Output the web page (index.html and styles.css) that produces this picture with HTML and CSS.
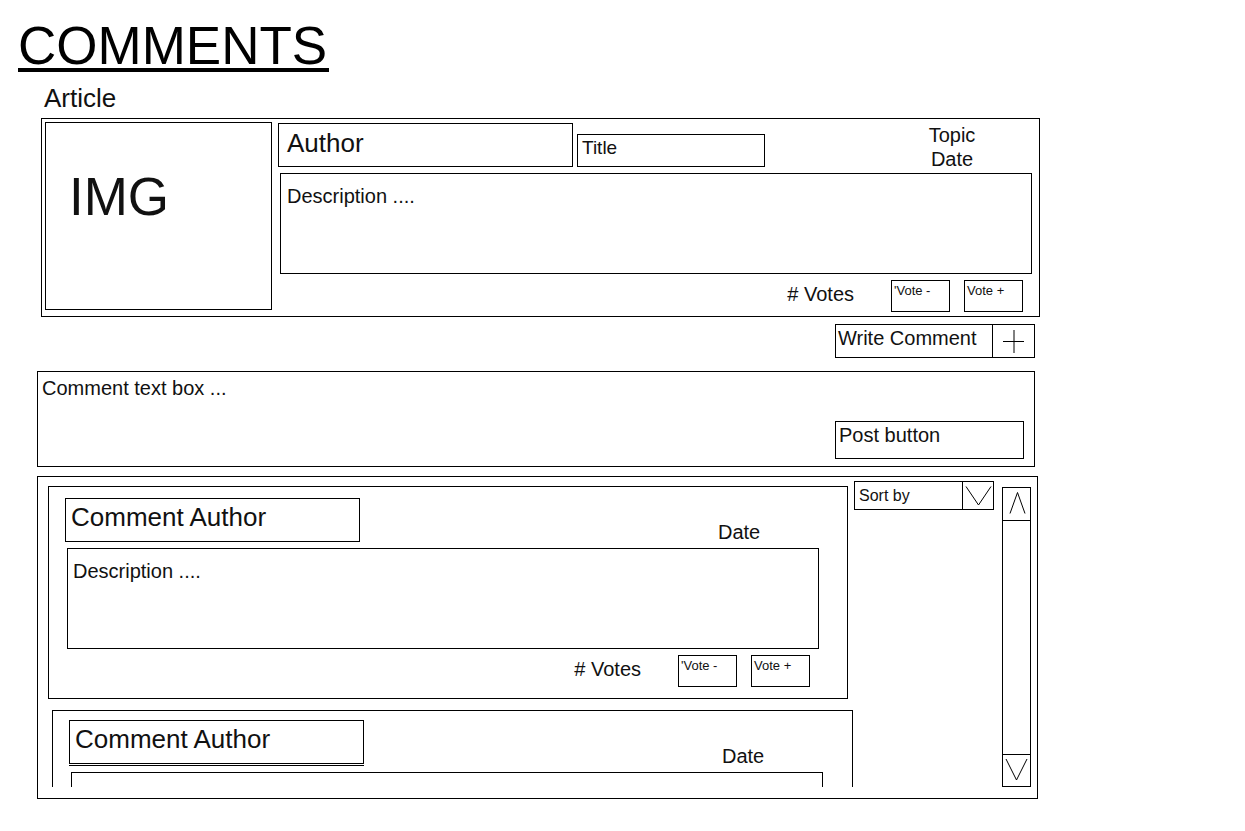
FILE: index.html
```html
<!DOCTYPE html>
<html lang="en">
<head>
    <meta charset="UTF-8">
    <meta name="viewport" content="width=device-width, initial-scale=1.0">
    <title>Comments</title>
    <link rel="stylesheet" href="styles.css">
</head>
<body>
    <div class="page">
        <h1 class="page-title">COMMENTS</h1>
        <div class="section-label">Article</div>

        <div class="article">
            <div class="img-box">IMG</div>
            <div class="article-main">
                <div class="article-head">
                    <div class="author-box">Author</div>
                    <div class="title-box">Title</div>
                    <div class="topic-date">Topic<br>Date</div>
                </div>
                <div class="desc-box article-desc">Description ....</div>
                <div class="vote-row article-votes">
                    <span class="vote-count"># Votes</span>
                    <div class="vote-btn">'Vote -</div>
                    <div class="vote-btn">Vote +</div>
                </div>
            </div>
        </div>

        <div class="write-row">
            <div class="write-label">Write Comment</div>
            <div class="plus-box">
                <svg width="22" height="23" viewBox="0 0 22 23"><path d="M0 11.5H21M11 0V23" stroke="#000" stroke-width="1" fill="none"/></svg>
            </div>
        </div>

        <div class="comment-form">
            <div class="form-text">Comment text box ...</div>
            <div class="post-btn">Post button</div>
        </div>

        <div class="comment-list">
            <div class="comment-scroll">
                <div class="comment">
                    <div class="comment-head">
                        <div class="comment-author">Comment Author</div>
                        <div class="comment-date">Date</div>
                    </div>
                    <div class="desc-box comment-desc">Description ....</div>
                    <div class="vote-row comment-votes">
                        <span class="vote-count"># Votes</span>
                        <div class="vote-btn">'Vote -</div>
                        <div class="vote-btn">Vote +</div>
                    </div>
                </div>
                <div class="comment comment-second">
                    <div class="comment-head">
                        <div class="comment-author doubled">Comment Author</div>
                        <div class="comment-date">Date</div>
                    </div>
                    <div class="desc-box comment-desc"></div>
                </div>
            </div>

            <div class="sort-by">
                <div class="sort-label">Sort by</div>
                <div class="sort-arrow">
                    <svg width="30" height="27" viewBox="0 0 30 27"><polyline points="3,4.5 15.5,23 28,4.5" stroke="#000" stroke-width="1" fill="none"/></svg>
                </div>
            </div>

            <div class="scrollbar">
                <div class="scroll-btn scroll-up">
                    <svg width="27" height="32" viewBox="0 0 27 32"><polyline points="7,25.5 14.5,4.5 22,25.5" stroke="#000" stroke-width="1" fill="none"/></svg>
                </div>
                <div class="scroll-btn scroll-down">
                    <svg width="27" height="31" viewBox="0 0 27 31"><polyline points="3,4 13.5,25 24,4" stroke="#000" stroke-width="1" fill="none"/></svg>
                </div>
            </div>
        </div>
    </div>
</body>
</html>
```

FILE: styles.css
```css
* {
    box-sizing: border-box;
}

body {
    margin: 0;
    font-family: "Liberation Sans", Arial, sans-serif;
    color: #111;
    background-color: #fff;
}

.page {
    padding-top: 19px;
}

.page-title {
    display: block;
    width: fit-content;
    margin: 0 0 0 18px;
    padding-right: 2px;
    height: 53px;
    font-size: 53px;
    font-weight: normal;
    line-height: 53px;
    color: #000;
    border-bottom: 4px solid #000;
}

.section-label {
    margin: 13px 0 0 44px;
    font-size: 26px;
    line-height: 26px;
}

/* article card */
.article {
    display: flex;
    width: 999px;
    height: 199px;
    margin: 7px 0 0 41px;
    padding: 3px 7px 0 3px;
    border: 1px solid #000;
}

.img-box {
    width: 227px;
    height: 188px;
    padding: 44px 0 0 23px;
    border: 1px solid #000;
    font-size: 53px;
    line-height: 60px;
}

.article-main {
    flex: 1;
    margin: 1px 0 0 6px;
}

.article-head {
    display: flex;
    align-items: flex-end;
    height: 44px;
}

.author-box {
    width: 295px;
    height: 44px;
    padding: 4px 0 0 8px;
    border: 1px solid #000;
    font-size: 26px;
    line-height: 30px;
}

.title-box {
    width: 188px;
    height: 33px;
    margin-left: 4px;
    padding: 2px 0 0 4px;
    border: 1px solid #000;
    font-size: 19px;
    line-height: 22px;
}

.topic-date {
    align-self: flex-start;
    width: 80px;
    margin-left: 147px;
    text-align: center;
    font-size: 20px;
    line-height: 24px;
}

.desc-box {
    width: 752px;
    height: 101px;
    border: 1px solid #000;
    font-size: 20px;
    line-height: 24px;
}

.article-desc {
    margin: 6px 0 0 2px;
    padding: 10px 0 0 6px;
}

/* votes */
.vote-row {
    display: flex;
    justify-content: flex-end;
    margin-top: 6px;
}

.article-votes {
    padding-right: 9px;
}

.comment-votes {
    padding-right: 37px;
}

.vote-count {
    margin: 2px 37px 0 0;
    font-size: 20px;
    line-height: 24px;
}

.vote-btn {
    width: 59px;
    height: 32px;
    padding: 2px 0 0 2px;
    border: 1px solid #000;
    font-size: 13px;
    line-height: 15px;
}

.vote-btn + .vote-btn {
    margin-left: 14px;
}

/* write comment */
.write-row {
    display: flex;
    width: 200px;
    height: 34px;
    margin: 7px 0 0 835px;
    border: 1px solid #000;
}

.write-label {
    flex: 1;
    padding: 1px 0 0 2px;
    font-size: 20px;
    line-height: 24px;
}

.plus-box {
    width: 42px;
    display: flex;
    align-items: center;
    justify-content: center;
    border-left: 1px solid #000;
    box-shadow: 1px -1px 0 #000;
}

.comment-form {
    display: flex;
    flex-direction: column;
    width: 998px;
    height: 96px;
    margin: 13px 0 0 37px;
    padding: 4px 10px 0 4px;
    border: 1px solid #000;
}

.form-text {
    font-size: 20px;
    line-height: 24px;
}

.post-btn {
    align-self: flex-end;
    width: 189px;
    height: 38px;
    margin-top: 21px;
    padding: 1px 0 0 3px;
    border: 1px solid #000;
    font-size: 20px;
    line-height: 24px;
}

/* comment list */
.comment-list {
    display: flex;
    align-items: flex-start;
    width: 1001px;
    height: 323px;
    margin: 9px 0 0 37px;
    border: 1px solid #000;
}

.comment-scroll {
    flex-shrink: 0;
    width: 816px;
    height: 310px;
    padding: 9px 0 0 10px;
    overflow: hidden;
}

.comment {
    width: 800px;
    height: 213px;
    padding: 11px 0 0 16px;
    border: 1px solid #000;
}

.comment-second {
    width: 801px;
    margin: 11px 0 0 4px;
    padding-top: 9px;
}

.comment-head {
    display: flex;
    height: 44px;
}

.comment-author {
    width: 295px;
    height: 44px;
    padding: 3px 0 0 5px;
    border: 1px solid #000;
    font-size: 26px;
    line-height: 30px;
}

.comment-author.doubled {
    box-shadow: 0 1px 0 #fff, 0 2px 0 #000;
}

.comment-date {
    margin: 22px 0 0 358px;
    font-size: 20px;
    line-height: 24px;
}

.comment-second .comment-date {
    margin-top: 24px;
}

.comment-desc {
    margin: 6px 0 0 2px;
    padding: 10px 0 0 5px;
}

.comment-second .comment-desc {
    margin-top: 8px;
}

.sort-by {
    display: flex;
    flex-shrink: 0;
    width: 140px;
    height: 29px;
    margin-top: 4px;
    border: 1px solid #000;
}

.sort-label {
    flex: 1;
    padding: 5px 0 0 4px;
    font-size: 16px;
    line-height: 18px;
}

.sort-arrow {
    width: 31px;
    border-left: 1px solid #000;
    box-shadow: 0 1px 0 #000;
}

.sort-arrow svg,
.scroll-btn svg {
    display: block;
}

.scrollbar {
    display: flex;
    flex-direction: column;
    justify-content: space-between;
    flex-shrink: 0;
    width: 29px;
    height: 300px;
    margin: 10px 0 0 8px;
    border: 1px solid #000;
}

.scroll-up {
    height: 33px;
    border-bottom: 1px solid #000;
}

.scroll-down {
    height: 32px;
    border-top: 1px solid #000;
}
```
